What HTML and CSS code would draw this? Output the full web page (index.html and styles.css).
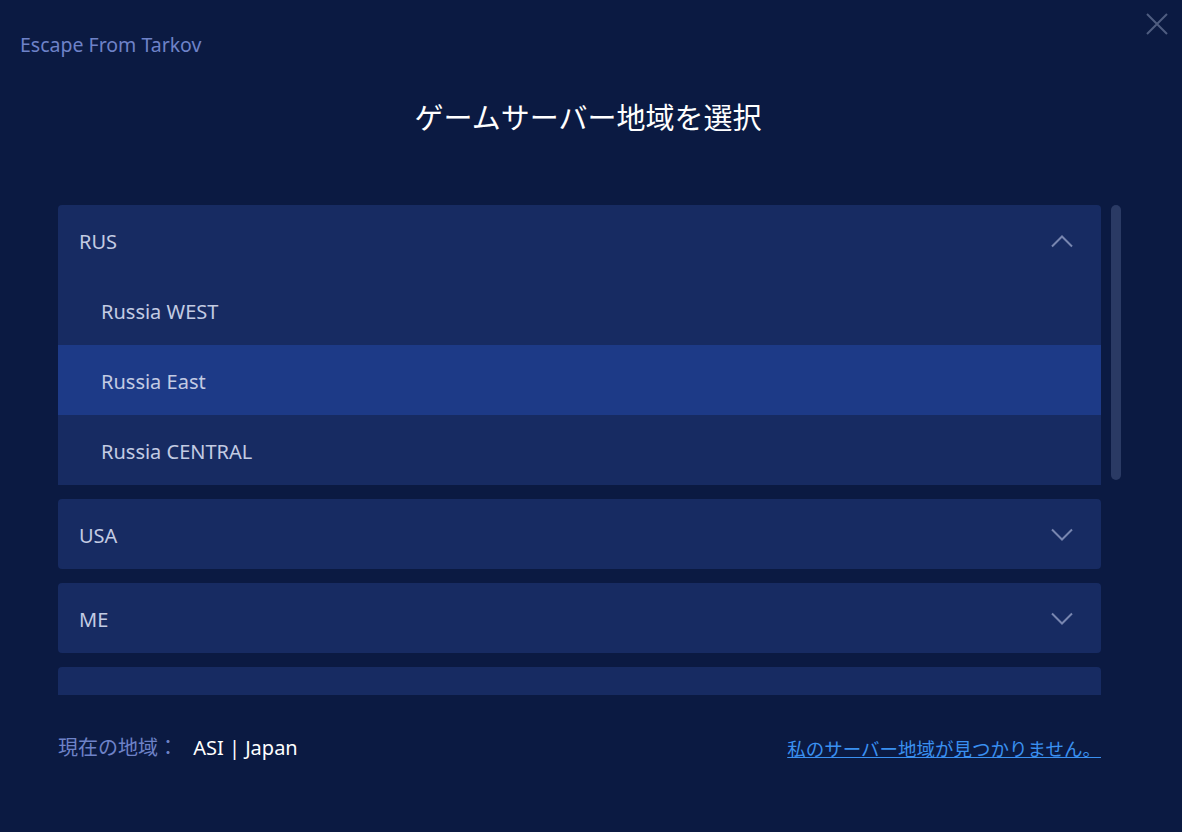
FILE: index.html
```html
<html>

<head>
<meta charset="UTF-8">
<title>Escape From Tarkov</title>

<link rel="stylesheet" href="styles.css">

</head>

<body>

<div class="window">

<div class="app-title">Escape From Tarkov</div>

<div class="close">
    <svg width="24" height="24" viewBox="0 0 24 24">
        <path d="M2 2 L22 22 M22 2 L2 22" stroke="#4f5d80" stroke-width="2" fill="none"/>
    </svg>
</div>

<h1 class="heading">ゲームサーバー地域を選択</h1>

<div class="region-area">
    <div class="region-list">

        <!-- RUS open -->
        <div class="group open">
            <div class="group-head">
                <span>RUS</span>
                <svg class="chevron" width="22" height="14" viewBox="0 0 22 14">
                    <polyline points="1,12.5 11,2.5 21,12.5" stroke="#7886b0" stroke-width="2" fill="none"/>
                </svg>
            </div>
            <div class="server">Russia WEST</div>
            <div class="server selected">Russia East</div>
            <div class="server">Russia CENTRAL</div>
        </div>

        <!-- USA -->
        <div class="group">
            <div class="group-head">
                <span>USA</span>
                <svg class="chevron" width="22" height="14" viewBox="0 0 22 14">
                    <polyline points="1,1.5 11,11.5 21,1.5" stroke="#7886b0" stroke-width="2" fill="none"/>
                </svg>
            </div>
        </div>

        <!-- ME -->
        <div class="group">
            <div class="group-head">
                <span>ME</span>
                <svg class="chevron" width="22" height="14" viewBox="0 0 22 14">
                    <polyline points="1,1.5 11,11.5 21,1.5" stroke="#7886b0" stroke-width="2" fill="none"/>
                </svg>
            </div>
        </div>

        <!-- next group, scrolled out of view -->
        <div class="group">
            <div class="group-head"></div>
        </div>

    </div>
    <div class="scroll-track">
        <div class="scroll-thumb"></div>
    </div>
</div>

<div class="footer">
    <div class="current">
        <span class="current-label">現在の地域：</span>
        <span class="current-value">ASI | Japan</span>
    </div>
    <a class="help-link" href="#">私のサーバー地域が見つかりません。</a>
</div>

</div>

</body>
</html>
```

FILE: styles.css
```css
body {
    margin: 0;
    background-color: #0b1a42;
    font-family: "Noto Sans", "Noto Sans CJK JP", sans-serif;
}

.window {
    position: relative;
    width: 1182px;
    height: 832px;
    padding: 33px 0 0 0;
    box-sizing: border-box;
}

.app-title {
    margin-left: 20px;
    font-size: 19.5px;
    line-height: 24px;
    color: #6e82c8;
}

.close {
    position: absolute;
    top: 12px;
    right: 13px;
    width: 24px;
    height: 24px;
}

.heading {
    margin: 39px 0 0 0;
    padding-right: 6px;
    text-align: center;
    font-family: "Noto Sans CJK JP", sans-serif;
    font-weight: normal;
    font-size: 29px;
    line-height: 40px;
    color: #ffffff;
}

.region-area {
    display: flex;
    gap: 10px;
    margin: 69px 0 0 58px;
    width: 1063px;
    height: 490px;
}

.region-list {
    flex: 1;
    display: flex;
    flex-direction: column;
    gap: 14px;
    overflow: hidden;
}

.group {
    flex-shrink: 0;
    background-color: #172b62;
    border-radius: 4px;
}

.group.open {
    border-radius: 4px 4px 0 0;
}

.group-head {
    display: flex;
    align-items: center;
    justify-content: space-between;
    box-sizing: border-box;
    height: 70px;
    padding: 2px 28px 0 21px;
    font-size: 20px;
    color: #c3cbe3;
}

.server {
    display: flex;
    align-items: center;
    box-sizing: border-box;
    height: 70px;
    padding: 2px 0 0 43px;
    font-size: 20px;
    color: #c3cbe3;
}

.server.selected {
    background-color: #1d3a87;
}

.scroll-track {
    width: 10px;
}

.scroll-thumb {
    height: 275px;
    border-radius: 5px;
    background-color: #2a3a64;
}

.footer {
    display: flex;
    justify-content: space-between;
    align-items: center;
    margin: 40px 0 0 58px;
    width: 1043px;
    font-size: 20px;
    line-height: 24px;
}

.current-label {
    font-family: "Noto Sans CJK JP", sans-serif;
    font-size: 20px;
    margin-right: 10px;
    color: #6e82c8;
}

.current-value {
    color: #ffffff;
}

.help-link {
    font-family: "Noto Sans CJK JP", sans-serif;
    font-size: 18.5px;
    color: #3a90f0;
    text-decoration: underline;
}
```
